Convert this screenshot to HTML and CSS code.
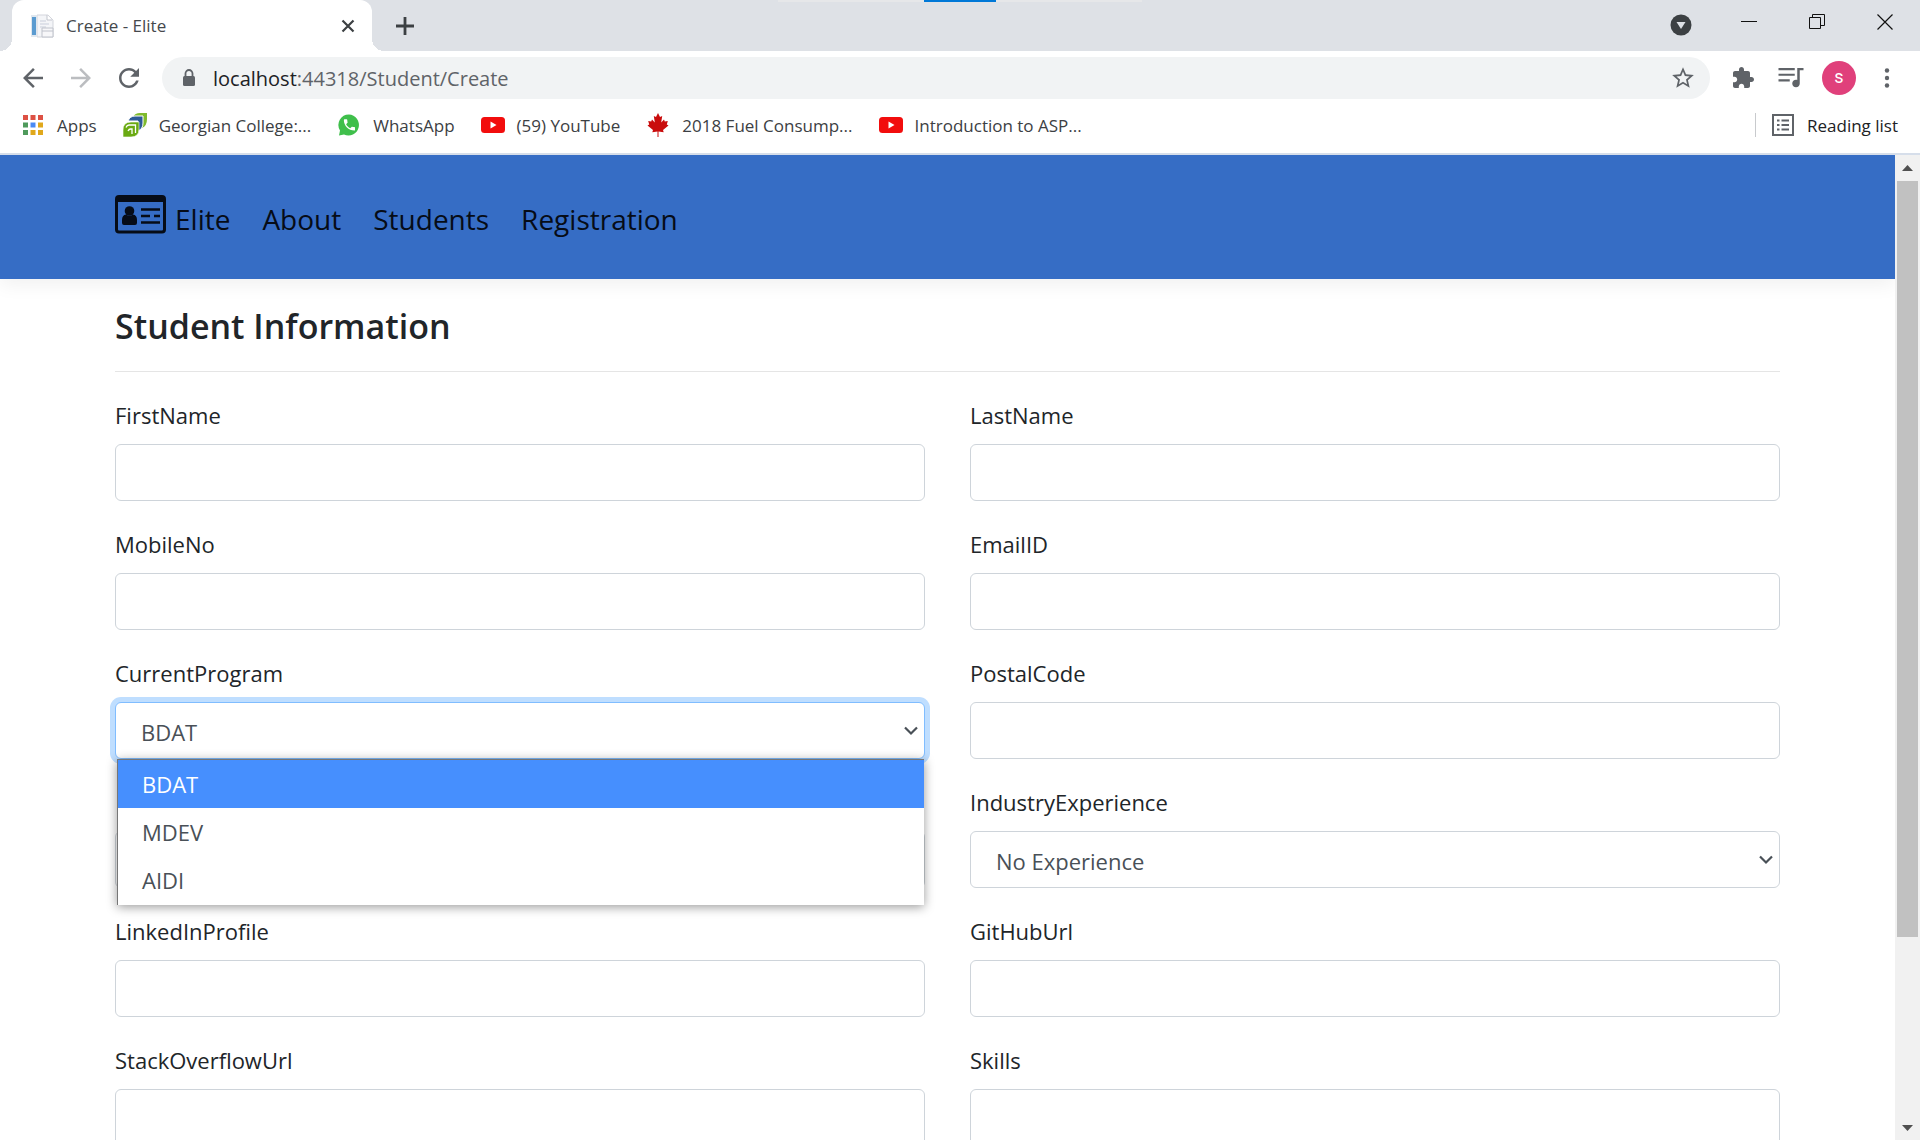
FILE: index.html
```html
<!DOCTYPE html>
<html lang="en">
<head>
<meta charset="utf-8">
<title>Create - Elite</title>
<link rel="stylesheet" href="styles.css">
</head>
<body>
<div class="browser">
  <div class="tabstrip">
    <div class="snap-bar"><span class="snap-mark"></span></div>
    <div class="tab">
      <svg class="icon-24" viewBox="0 0 24 24"><path d="M7 1h11l5 5v17H7z" fill="#f4f5f8" stroke="#d3d5dc"/><path d="M17 1v5h5" fill="#fff" stroke="#c3c6ce"/><path d="M10 7h6M10 10h9M10 13h6" stroke="#c9cedb"/><path d="M12 14h11v9H12z" fill="#f7f7f9" stroke="#bfc2cb"/><path d="M12 17h11" stroke="#bfc2cb"/><path d="M1 1h6v22H1z" fill="#dfe7ef"/><path d="M2 3h4v18H2z" fill="#5b9bd0"/></svg>
      <span class="tab-title">Create - Elite</span>
      <button class="chrome-btn" aria-label="Close tab"><svg class="icon-24" viewBox="0 0 24 24"><path d="M6.500 6.500l11 11M17.500 6.500l-11 11" stroke="#3c4043" stroke-width="2.200"/></svg></button>
    </div>
    <button class="chrome-btn new-tab" aria-label="New tab"><svg class="icon-24" viewBox="0 0 24 24"><path d="M12 3v18M3 12h18" stroke="#3c4043" stroke-width="2.800"/></svg></button>
    <div class="window-controls">
      <button class="chrome-btn" aria-label="Search tabs"><svg class="icon-24" viewBox="0 0 24 24"><circle cx="12" cy="13" r="10.500" fill="#3c4043"/><path d="M7.500 10h9L12 17z" fill="#dee1e6"/></svg></button>
      <button class="chrome-btn" aria-label="Minimize"><svg class="icon-24" viewBox="0 0 24 24"><path d="M4 9.500h16" stroke="#111"/></svg></button>
      <button class="chrome-btn" aria-label="Restore"><svg class="icon-24" viewBox="0 0 24 24"><path d="M4.500 5.500h11v11h-11zM7.500 5.500v-3h12v11h-4" fill="none" stroke="#111"/></svg></button>
      <button class="chrome-btn" aria-label="Close window"><svg class="icon-24" viewBox="0 0 24 24"><path d="M4.500 2.500l15 15M19.500 2.500l-15 15" stroke="#111" stroke-width="1.200"/></svg></button>
    </div>
  </div>

  <div class="toolbar">
    <div class="nav-buttons">
      <button class="chrome-btn" aria-label="Back"><svg class="icon-30" viewBox="0 0 24 24"><path fill="#5f6368" d="M20 11H7.830l5.590-5.590L12 4l-8 8 8 8 1.410-1.410L7.830 13H20v-2z"/></svg></button>
      <button class="chrome-btn" aria-label="Forward"><svg class="icon-30" viewBox="0 0 24 24"><path fill="#bbbdc0" d="M4 11h12.170l-5.590-5.590L12 4l8 8-8 8-1.410-1.410L16.170 13H4v-2z"/></svg></button>
      <button class="chrome-btn" aria-label="Reload"><svg class="icon-30" viewBox="0 0 24 24"><path fill="#5f6368" d="M17.650 6.350C16.200 4.900 14.210 4 12 4c-4.420 0-7.990 3.580-7.990 8s3.570 8 7.990 8c3.730 0 6.840-2.550 7.730-6h-2.080c-.82 2.330-3.040 4-5.650 4-3.310 0-6-2.690-6-6s2.690-6 6-6c1.660 0 3.140.69 4.220 1.780L13 11h7V4l-2.350 2.350z"/></svg></button>
    </div>
    <div class="omnibox">
      <svg class="icon-24" viewBox="0 0 24 24"><rect x="6" y="10" width="12" height="10" rx="1.500" fill="#5f6368"/><path d="M8.500 11V7.500a3.500 3.500 0 0 1 7 0V11" fill="none" stroke="#5f6368" stroke-width="1.800"/></svg>
      <span class="url"><span class="url-host">localhost</span>:44318/Student/Create</span>
      <button class="chrome-btn" aria-label="Bookmark this tab"><svg class="icon-26" viewBox="0 0 24 24"><path fill="#5f6368" d="M22 9.240l-7.190-.62L12 2 9.190 8.630 2 9.240l5.460 4.730L5.820 21 12 17.270 18.180 21l-1.630-7.030L22 9.240zM12 15.400l-3.760 2.270 1-4.280-3.320-2.880 4.380-.38L12 6.100l1.710 4.040 4.380.38-3.320 2.880 1 4.280L12 15.400z"/></svg></button>
    </div>
    <div class="toolbar-actions">
      <button class="chrome-btn" aria-label="Extensions"><svg class="icon-24" viewBox="0 0 24 24"><path fill="#5f6368" d="M20.500 11H19V7c0-1.100-.9-2-2-2h-4V3.500C13 2.120 11.880 1 10.500 1S8 2.120 8 3.500V5H4c-1.100 0-1.990.9-1.990 2v3.800H3.500c1.490 0 2.700 1.210 2.700 2.700s-1.210 2.700-2.700 2.700H2V20c0 1.100.9 2 2 2h3.800v-1.500c0-1.490 1.210-2.700 2.700-2.700 1.490 0 2.700 1.210 2.700 2.700V22H17c1.100 0 2-.9 2-2v-4h1.500c1.380 0 2.500-1.120 2.500-2.500S21.880 11 20.500 11z"/></svg></button>
      <button class="chrome-btn" aria-label="Media controls"><svg class="icon-30" viewBox="0 0 24 24"><path fill="#5f6368" d="M15 4H2v1.700h13V4zm0 4.500H2v1.700h13V8.500zM2 14.700h9V13H2v1.700zM17 4v9.500c-.31-.11-.65-.18-1-.18-1.660 0-3 1.340-3 3s1.340 3 3 3 3-1.340 3-3V5.700h3V4h-5z"/></svg></button>
      <button class="avatar" aria-label="Profile">s</button>
      <button class="chrome-btn" aria-label="Menu"><svg class="icon-24" viewBox="0 0 24 24"><g fill="#5f6368"><circle cx="12" cy="4.500" r="2.200"/><circle cx="12" cy="12" r="2.200"/><circle cx="12" cy="19.500" r="2.200"/></g></svg></button>
    </div>
  </div>

  <div class="bookmarks">
    <a class="bookmark" href="#"><svg class="icon-24" viewBox="0 0 24 24"><path fill="#dd5144" d="M2 2h5v5H2zM9.500 2h5v5h-5zM17 2h5v5h-5z"/><path fill="#4f9a5c" d="M2 9.500h5v5H2zM2 17h5v5H2z"/><path fill="#4a8af4" d="M9.500 9.500h5v5h-5z"/><path fill="#e0a81c" d="M17 9.500h5v5h-5zM9.500 17h5v5h-5zM17 17h5v5h-5z"/></svg>Apps</a>
    <a class="bookmark" href="#"><svg class="icon-24" viewBox="0 0 24 24"><path d="M10 4q2-4 7-4h7v6q0 7-5 9V4z" fill="#7fba2e"/><path d="M5 8q2-5 7-5h8v7q0 6-5 8V8z" fill="#2d5a96" stroke="#fff" stroke-width="1"/><path d="M0 24v-7q0-8 8-8h8v7q0 8-8 8z" fill="#6aaa12" stroke="#fff" stroke-width=".6"/><path d="M3 14.500q1-2.500 3-2.500h6.500v8M5 18q1-2 2.500-2H9v5" fill="none" stroke="#fff" stroke-width="1.300"/></svg>Georgian College:...</a>
    <a class="bookmark" href="#"><svg class="icon-24" viewBox="0 0 24 24"><path d="M12 1.500A10.500 10.500 0 1 1 7 21.500L2 22.500 3 17.500A10.500 10.500 0 0 1 12 1.500z" fill="#3fbf4b"/><path transform="translate(5 4.500) scale(.62)" fill="#fff" d="M6.620 10.790c1.440 2.830 3.760 5.140 6.590 6.590l2.200-2.200c.27-.27.67-.36 1.020-.24 1.120.37 2.330.57 3.570.57.55 0 1 .45 1 1V20c0 .55-.45 1-1 1-9.390 0-17-7.610-17-17 0-.55.45-1 1-1h3.500c.55 0 1 .45 1 1 0 1.250.2 2.450.57 3.570.11.350.03.740-.25 1.020l-2.200 2.200z"/></svg>WhatsApp</a>
    <a class="bookmark" href="#"><svg class="icon-24" viewBox="0 0 24 24"><rect y="4" width="24" height="16" rx="3.500" fill="#f20d0d"/><path d="M9.500 8.500v7l6-3.500z" fill="#fff"/></svg>(59) YouTube</a>
    <a class="bookmark" href="#"><svg class="icon-24" viewBox="0 0 24 24"><path d="M12 0l2 4 2.200-1-1 6.500L18 6.500l.8 2 3-.5-1 3.500 1.700 1-5.500 4.500.7 2.200-5.200-.6V24h-1v-5.400l-5.200.6.700-2.200L1.500 12.500l1.700-1-1-3.500 3 .5.800-2 2.800 3-1-6.500 2.200 1z" fill="#c90c0c"/></svg>2018 Fuel Consump...</a>
    <a class="bookmark" href="#"><svg class="icon-24" viewBox="0 0 24 24"><rect y="4" width="24" height="16" rx="3.500" fill="#f20d0d"/><path d="M9.500 8.500v7l6-3.500z" fill="#fff"/></svg>Introduction to ASP...</a>
    <a class="bookmark reading-list" href="#"><svg class="icon-24" viewBox="0 0 24 24"><path d="M2 2h20v20H2z" fill="none" stroke="#5f6368" stroke-width="2"/><path d="M6 7.500h2.500M6 12h2.500M6 16.500h2.500M10.500 7.500H18M10.500 12H18M10.500 16.500H18" stroke="#5f6368" stroke-width="2"/></svg>Reading list</a>
  </div>

  <div class="viewport">
    <div class="page">
      <header class="site-header">
        <nav class="site-nav">
          <a class="brand" href="#"><svg class="brand-icon" viewBox="0 0 51 40"><rect x="1.500" y="2.500" width="48" height="35.500" rx="2.500" fill="none" stroke="#060c17" stroke-width="3"/><path d="M1 3h49v5H1z" fill="#060c17"/><circle cx="14.500" cy="17" r="4.800" fill="#060c17"/><path d="M7 29v-3q0-5 4-5.500 3.500 2.500 7 0 4 .5 4 5.500v3q0 2-2 2H9q-2 0-2-2z" fill="#060c17"/><path d="M26 15.500h19M26 22h9M39 22h6M26 28.500h19" stroke="#060c17" stroke-width="2.600"/></svg>Elite</a>
          <a href="#">About</a>
          <a href="#">Students</a>
          <a href="#">Registration</a>
        </nav>
      </header>
      <main class="content">
        <h1 class="page-title">Student Information</h1>
        <form class="student-form">
          <div class="field"><label for="first">FirstName</label><input id="first" type="text"></div>
          <div class="field"><label for="last">LastName</label><input id="last" type="text"></div>
          <div class="field"><label for="mobile">MobileNo</label><input id="mobile" type="text"></div>
          <div class="field"><label for="email">EmailID</label><input id="email" type="text"></div>
          <div class="field">
            <label for="program">CurrentProgram</label>
            <div class="select-box is-open">
              <select id="program"><option>BDAT</option><option>MDEV</option><option>AIDI</option></select>
              <svg class="chevron" viewBox="0 0 14 10"><path d="M1 1.500l6 6 6-6" fill="none" stroke="#495057" stroke-width="2.200"/></svg>
              <ul class="options" role="listbox" aria-label="CurrentProgram">
                <li class="is-selected" role="option" aria-selected="true">BDAT</li>
                <li role="option" aria-selected="false">MDEV</li>
                <li role="option" aria-selected="false">AIDI</li>
              </ul>
            </div>
          </div>
          <div class="field"><label for="postal">PostalCode</label><input id="postal" type="text"></div>
          <div class="field field-unlabelled"><input type="text" aria-label="Program details"></div>
          <div class="field">
            <label for="experience">IndustryExperience</label>
            <div class="select-box">
              <select id="experience"><option>No Experience</option></select>
              <svg class="chevron" viewBox="0 0 14 10"><path d="M1 1.500l6 6 6-6" fill="none" stroke="#495057" stroke-width="2.200"/></svg>
            </div>
          </div>
          <div class="field"><label for="linkedin">LinkedInProfile</label><input id="linkedin" type="text"></div>
          <div class="field"><label for="github">GitHubUrl</label><input id="github" type="text"></div>
          <div class="field"><label for="stack">StackOverflowUrl</label><input id="stack" type="text"></div>
          <div class="field"><label for="skills">Skills</label><input id="skills" type="text"></div>
        </form>
      </main>
    </div>
    <div class="scrollbar" aria-hidden="true">
      <svg class="scroll-arrow" viewBox="0 0 25 26"><path d="M7 16l5.500-6 5.500 6z" fill="#505050"/></svg>
      <div class="scroll-track"><div class="scroll-thumb"></div></div>
      <svg class="scroll-arrow" viewBox="0 0 25 26"><path d="M7 11l5.500 6 5.500-6z" fill="#505050"/></svg>
    </div>
  </div>
</div>
</body>
</html>
```
FILE: styles.css
```css
* { box-sizing: border-box; }

body {
  margin: 0;
  background: #fff;
  color: #212529;
  font-family: "Open Sans", "Noto Sans", sans-serif;
  font-size: 22px;
}

a { color: inherit; text-decoration: none; }
svg { display: block; flex: none; }
button, input, select { font: inherit; }

.icon-24 { width: 24px; height: 24px; }
.icon-26 { width: 26px; height: 26px; }
.icon-30 { width: 30px; height: 30px; }

.browser {
  display: flex;
  flex-direction: column;
  height: 100vh;
  overflow: hidden;
}

.chrome-btn {
  display: flex;
  justify-content: center;
  padding: 0;
  border: 0;
  background: none;
}

/* Tab strip */
.tabstrip {
  position: relative;
  display: flex;
  align-items: center;
  height: 51px;
  padding-left: 12px;
  background: #dee1e6;
}

.snap-bar {
  position: absolute;
  top: 0;
  left: 50%;
  display: flex;
  justify-content: center;
  width: 364px;
  height: 2px;
  background: #e6e7e9;
  transform: translateX(-50%);
}

.snap-mark { width: 72px; background: #0078d7; }

.tab {
  position: relative;
  display: flex;
  align-items: center;
  gap: 12px;
  width: 360px;
  height: 51px;
  padding: 0 12px 0 18px;
  border-radius: 12px 12px 0 0;
  background: #fff;
}

.tab::before,
.tab::after {
  position: absolute;
  bottom: 0;
  width: 12px;
  height: 12px;
  content: "";
}

.tab::before { left: -12px; background: radial-gradient(circle at 0 0, #dee1e6 12px, #fff 12px); }
.tab::after { right: -12px; background: radial-gradient(circle at 100% 0, #dee1e6 12px, #fff 12px); }

.tab-title {
  flex: 1;
  color: #45484c;
  font-size: 17px;
}

.new-tab { margin-left: 21px; }

.window-controls {
  display: flex;
  gap: 44px;
  margin-left: auto;
  padding: 0 23px 3px 0;
}

/* Toolbar */
.toolbar {
  display: flex;
  align-items: center;
  height: 54px;
  padding-left: 18px;
}

.nav-buttons { display: flex; gap: 18px; width: 144px; }

.omnibox {
  display: flex;
  flex: 1;
  align-items: center;
  gap: 12px;
  height: 42px;
  padding: 0 14px 0 15px;
  border-radius: 21px;
  background: #f1f3f4;
}

.url { flex: 1; color: #5f6368; font-size: 20px; }
.url-host { color: #202124; }

.toolbar-actions {
  display: grid;
  grid-template-columns: repeat(4, 34px);
  align-items: center;
  gap: 14px;
  padding: 0 16px;
}

.avatar {
  width: 34px;
  height: 34px;
  padding: 0 0 2px;
  border: 0;
  border-radius: 50%;
  background: #e0407b;
  color: #fff;
  font-family: Roboto, sans-serif;
  font-size: 18px;
  line-height: 32px;
}

/* Bookmarks bar */
.bookmarks {
  display: flex;
  align-items: center;
  gap: 26px;
  height: 50px;
  padding: 0 22px 8px 21px;
  border-bottom: 2px solid #d6deea;
  color: #3c4043;
  font-size: 17px;
}

.bookmark { display: flex; align-items: center; gap: 12px; }

.reading-list {
  height: 24px;
  margin-left: auto;
  padding-left: 15px;
  border-left: 1px solid #c8cacd;
  color: #202124;
}

/* Viewport */
.viewport {
  display: flex;
  flex: 1;
  min-height: 0;
}

.page { flex: 1; overflow: hidden; }

.site-header {
  height: 124px;
  padding: 0 115px;
  background: #366dc5;
  box-shadow: 0 6px 18px rgba(0, 0, 0, .06);
}

.site-nav {
  display: flex;
  align-items: center;
  gap: 32px;
  height: 124px;
  padding-top: 4px;
  color: #060c17;
  font-size: 28px;
}

.brand { display: flex; align-items: center; gap: 9px; }
.brand-icon { width: 51px; height: 40px; margin-bottom: 10px; }

.content { padding: 24px 115px 0; }

.page-title {
  margin: 0 0 24px;
  padding-bottom: 21px;
  border-bottom: 1px solid #e5e5e5;
  font-size: 34px;
  font-weight: 600;
  line-height: 47px;
}

.student-form {
  display: grid;
  grid-template-columns: 1fr 1fr;
  gap: 24px 45px;
}

.field {
  display: flex;
  flex-direction: column;
  gap: 11px;
}

.field-unlabelled { justify-content: flex-end; }

.field label { padding-top: 1px; line-height: 36px; }

.field input,
.field select {
  width: 100%;
  height: 57px;
  margin: 0;
  border: 1px solid #ced4da;
  border-radius: 6px;
  background: #fff;
  color: #495057;
}

.field input { padding: 0 18px; }

.field select {
  grid-area: 1 / 1;
  padding: 2px 25px 0;
  appearance: none;
}

.select-box {
  position: relative;
  display: grid;
  align-items: center;
}

.chevron {
  grid-area: 1 / 1;
  justify-self: end;
  width: 14px;
  height: 10px;
  margin-right: 7px;
  pointer-events: none;
}

.is-open select {
  border-color: #80bdff;
  box-shadow: 0 0 0 5px #bfdeff;
}

.options {
  position: absolute;
  z-index: 1;
  top: 100%;
  right: 1px;
  left: 2px;
  margin: 0;
  padding: 0 0 1px;
  border-top: 1px solid #767676;
  border-left: 1px solid #767676;
  background: #fff;
  box-shadow: 0 2px 10px rgba(0, 0, 0, .4);
  color: #495057;
  line-height: 48px;
  list-style: none;
}

.options li { height: 48px; padding: 0 24px; }
.options .is-selected { background: #468ffe; color: #fff; }

/* Scrollbar */
.scrollbar {
  display: flex;
  flex-direction: column;
  width: 25px;
  background: #f1f1f1;
}

.scroll-arrow { width: 25px; height: 26px; }
.scroll-track { flex: 1; padding: 0 2px; }
.scroll-thumb { height: 81%; background: #c1c1c1; }
```
